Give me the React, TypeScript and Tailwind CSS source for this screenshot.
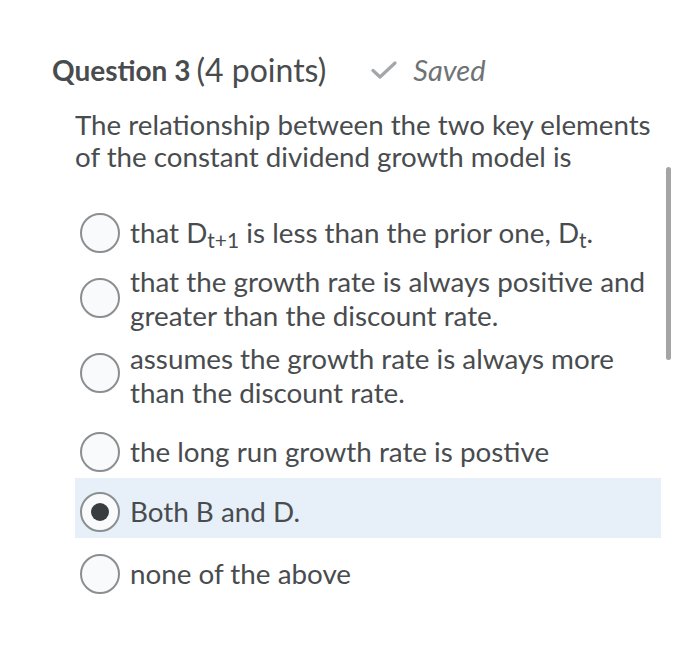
import React from "react";

type Option = {
  id: string;
  label: React.ReactNode;
  checked?: boolean;
  rowClass: string;
  radioClass: string;
};

function Radio({ checked, className }: { checked?: boolean; className: string }) {
  return (
    <span
      className={`flex h-[40px] w-[40px] shrink-0 items-center justify-center rounded-full border-2 border-[#8c8f91] bg-[#f9fafb] ${className}`}
    >
      {checked && <span className="h-[18px] w-[18px] rounded-full bg-[#3a3d40]" />}
    </span>
  );
}

const options: Option[] = [
  {
    id: "a",
    label: (
      <>
        that D<sub className="relative top-[5px] align-baseline text-[21px]">t+1</sub> is less than the prior one, D
        <sub className="relative top-[5px] align-baseline text-[21px]">t</sub>.
      </>
    ),
    rowClass: "mt-[40px] items-center",
    radioClass: "",
  },
  {
    id: "b",
    label: (
      <>
        that the growth rate is always positive and
        <br />
        greater than the discount rate.
      </>
    ),
    rowClass: "mt-[12px] items-start",
    radioClass: "mt-[13px]",
  },
  {
    id: "c",
    label: (
      <>
        assumes the growth rate is always more
        <br />
        than the discount rate.
      </>
    ),
    rowClass: "mt-[9px] items-start",
    radioClass: "mt-[11px]",
  },
  {
    id: "d",
    label: "the long run growth rate is postive",
    rowClass: "mt-[22px] items-center",
    radioClass: "",
  },
  {
    id: "e",
    label: "Both B and D.",
    checked: true,
    rowClass: "mt-[6px] items-center bg-[#e7f0f9] pt-[14px] pb-[6px]",
    radioClass: "",
  },
  {
    id: "f",
    label: "none of the above",
    rowClass: "mt-[16px] items-center",
    radioClass: "",
  },
];

export default function App() {
  return (
    <main
      className="relative h-[646px] w-[700px] overflow-hidden bg-white text-[#494c4e]"
      style={{ fontFamily: "Lato, 'Open Sans', sans-serif" }}
    >
      <div className="flex items-center pl-[52px] pt-[52px] leading-[36px]">
        <span className="text-[28px] font-bold">Question 3</span>
        <span className="ml-[6px] text-[32px]">(4 points)</span>
        <svg
          className="ml-[45px]"
          width="26"
          height="18"
          viewBox="0 0 26 18"
          fill="none"
        >
          <path
            d="M2 9.5 L9 16 L24 2"
            stroke="#a3a7aa"
            strokeWidth="3.2"
            strokeLinecap="round"
            strokeLinejoin="round"
          />
        </svg>
        <span className="ml-[16px] text-[29px] italic text-[#6e7376]">Saved</span>
      </div>

      <p className="mt-[21px] pl-[75px] text-[27.7px] leading-[32px]">
        The relationship between the two key elements
        <br />
        of the constant dividend growth model is
      </p>

      <div className="ml-[75px] w-[586px]">
        {options.map((o) => (
          <div key={o.id} className={`flex pl-[5px] ${o.rowClass}`}>
            <Radio checked={o.checked} className={o.radioClass} />
            <span className="ml-[10px] whitespace-nowrap text-[27.8px] leading-[34px]">{o.label}</span>
          </div>
        ))}
      </div>

      <div className="absolute left-[666px] top-[167px] h-[193px] w-[5px] rounded-full bg-[#a5a5a5]" />
    </main>
  );
}
